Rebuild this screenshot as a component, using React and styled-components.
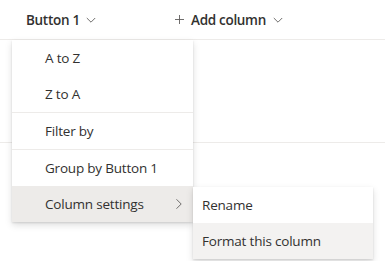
import React from 'react';
import styled, { createGlobalStyle } from 'styled-components';

const GlobalStyle = createGlobalStyle`
  html, body {
    margin: 0;
    background: #fff;
  }
  body {
    font-family: 'Open Sans', 'Noto Sans', sans-serif;
    color: #323130;
    -webkit-font-smoothing: antialiased;
  }
`;

const Page = styled.div`
  position: relative;
  width: 385px;
  height: 261px;
  overflow: hidden;
`;

const Header = styled.div`
  display: flex;
  align-items: center;
  height: 40px;
  padding-left: 26px;
  border-bottom: 1px solid #edebe9;
  box-sizing: border-box;
`;

const ColumnHead = styled.div`
  display: flex;
  align-items: center;
  gap: ${(p) => p.$gap || 6}px;
  width: ${(p) => (p.$width ? `${p.$width}px` : 'auto')};
  font-size: 13.5px;
  letter-spacing: -0.3px;
  font-weight: 600;
  color: #323130;
  line-height: 20px;
`;

const Row = styled.div`
  height: 103px;
  border-bottom: 1px solid #edebe9;
  box-sizing: border-box;
`;

const Menu = styled.ul`
  position: absolute;
  top: ${(p) => p.$top}px;
  left: ${(p) => p.$left}px;
  width: ${(p) => p.$width}px;
  margin: 0;
  padding: 0;
  list-style: none;
  background: #fff;
  box-shadow: 0 3.2px 7.2px rgba(0, 0, 0, 0.132), 0 0.6px 1.8px rgba(0, 0, 0, 0.108);
`;

const Item = styled.li`
  position: relative;
  display: flex;
  align-items: center;
  justify-content: space-between;
  height: 36px;
  padding: 0 10px 0 ${(p) => p.$indent}px;
  font-size: 13.5px;
  letter-spacing: -0.2px;
  color: #323130;
  background: ${(p) => p.$bg || 'transparent'};
`;

const Divider = styled.li`
  height: 1px;
  background: #edebe9;
`;

const Chevron = ({ dir, size = 10, color = '#605e5c' }) => (
  <svg width={size} height={size} viewBox="0 0 10 10" fill="none">
    {dir === 'down' ? (
      <path d="M0.8 3 L5 7.2 L9.2 3" stroke={color} strokeWidth="0.9" />
    ) : (
      <path d="M3.5 0.3 L8.2 5 L3.5 9.7" stroke={color} strokeWidth="0.9" />
    )}
  </svg>
);

const Plus = () => (
  <svg width="9" height="9" viewBox="0 0 9 9" fill="none">
    <path d="M4.5 0 V9 M0 4.5 H9" stroke="#605e5c" strokeWidth="0.9" />
  </svg>
);

export default function App() {
  return (
    <Page>
      <GlobalStyle />
      <Header>
        <ColumnHead $width={149}>
          Button 1 <Chevron dir="down" />
        </ColumnHead>
        <ColumnHead $gap={7}>
          <Plus />
          <span>Add column</span>
          <Chevron dir="down" />
        </ColumnHead>
      </Header>
      <Row />
      <Menu $top={40} $left={12} $width={181}>
        <Item $indent={33}>A to Z</Item>
        <Item $indent={33}>Z to A</Item>
        <Divider />
        <Item $indent={33}>Filter by</Item>
        <Divider />
        <Item $indent={33}>Group by Button 1</Item>
        <Item $indent={33} $bg="#edebe9">
          Column settings
          <Chevron dir="right" size={10} color="#605e5c" />
        </Item>
      </Menu>
      <Menu $top={187} $left={193} $width={180}>
        <Item $indent={9}>Rename</Item>
        <Item $indent={9} $bg="#f3f2f1">Format this column</Item>
      </Menu>
    </Page>
  );
}
